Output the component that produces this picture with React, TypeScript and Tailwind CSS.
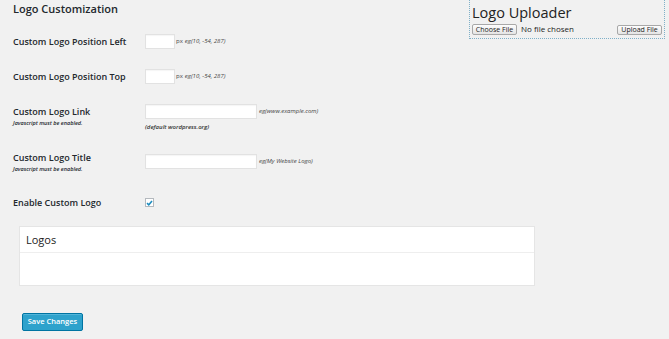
import React from 'react'

const Hint: React.FC<{ children: React.ReactNode }> = ({ children }) => (
  <span className="ml-[2px] text-[6px] italic text-[#444]">{children}</span>
)

const TextInput: React.FC<{ w: string }> = ({ w }) => (
  <div className={`${w} h-[15px] border border-[#e2e2e2] bg-white shadow-[inset_0_1px_1px_rgba(0,0,0,0.04)]`} />
)

const App: React.FC = () => {
  return (
    <div className="relative h-[339px] w-[669px] overflow-hidden bg-[#f1f1f1] font-['Open_Sans',sans-serif] text-[#23282d]">
      {/* Uploader box */}
      <div className="absolute left-[469px] top-[-2px] h-[41px] w-[196px] border border-dotted border-[#7fb0c8] px-[2px]">
        <div className="mt-[5px] text-[14.5px] leading-[17px] text-[#222]">Logo Uploader</div>
        <div className="mt-[2px] flex items-center">
          <button className="h-[11px] w-[45px] rounded-[2px] border border-[#a8a8a8] bg-gradient-to-b from-[#fdfdfd] to-[#e4e4e4] text-[7px] leading-[9px] text-[#222]">
            Choose File
          </button>
          <span className="ml-[4px] text-[8px] text-[#222]">No file chosen</span>
          <button className="ml-auto mt-[2px] h-[10px] w-[45px] rounded-[2px] border border-[#a8a8a8] bg-gradient-to-b from-[#fdfdfd] to-[#e4e4e4] text-[7px] leading-[8px] text-[#222]">
            Upload File
          </button>
        </div>
      </div>

      <div className="pl-[13px]">
        <div className="mt-[2px] text-[11px] font-semibold leading-[14px]">Logo Customization</div>

        {/* Position left */}
        <div className="mt-[18px] flex h-[15px] items-center">
          <div className="w-[132px] text-[9px] font-semibold">Custom Logo Position Left</div>
          <TextInput w="w-[30px]" />
          <span className="ml-[1px] text-[6px] text-[#444]">px</span>
          <Hint>eg(10, -54, 287)</Hint>
        </div>

        {/* Position top */}
        <div className="mt-[20px] flex h-[15px] items-center">
          <div className="w-[132px] text-[9px] font-semibold">Custom Logo Position Top</div>
          <TextInput w="w-[30px]" />
          <span className="ml-[1px] text-[6px] text-[#444]">px</span>
          <Hint>eg(10, -54, 287)</Hint>
        </div>

        {/* Link */}
        <div className="mt-[20px] flex h-[32px] items-start">
          <div className="w-[132px]">
            <div className="text-[9px] font-semibold leading-[15px]">Custom Logo Link</div>
            <div className="text-[5.5px] font-semibold italic leading-[9px]">Javascript must be enabled.</div>
          </div>
          <div>
            <div className="flex items-center">
              <TextInput w="w-[112px]" />
              <Hint>eg(www.example.com)</Hint>
            </div>
            <div className="mt-[3px] text-[6px] font-semibold italic leading-[10px] text-[#333]">(default wordpress.org)</div>
          </div>
        </div>

        {/* Title */}
        <div className="mt-[18px] flex h-[20px] items-start">
          <div className="-mt-[4px] w-[132px]">
            <div className="text-[9px] font-semibold leading-[15px]">Custom Logo Title</div>
            <div className="text-[5.5px] font-semibold italic leading-[9px]">Javascript must be enabled.</div>
          </div>
          <div className="flex items-center">
            <TextInput w="w-[112px]" />
            <Hint>eg(My Website Logo)</Hint>
          </div>
        </div>

        {/* Enable */}
        <div className="mt-[21px] flex h-[15px] items-center">
          <div className="w-[132px] text-[9px] font-semibold">Enable Custom Logo</div>
          <div className="flex h-[9px] w-[9px] items-center justify-center border border-[#b4b9be] bg-white">
            <svg width="7" height="6" viewBox="0 0 7 6">
              <path d="M1 3.2 L2.8 4.8 L6 1" fill="none" stroke="#1e8cbe" strokeWidth="1.6" />
            </svg>
          </div>
        </div>

        {/* Logos panel */}
        <div className="ml-[6px] mt-[16px] h-[60px] w-[516px] border border-[#e5e5e5] bg-white">
          <div className="flex h-[26px] items-center border-b border-[#eeeeee] pl-[6px] text-[11px] font-medium leading-none text-[#222]">
            Logos
          </div>
        </div>

        {/* Save */}
        <button className="ml-[9px] mt-[27px] h-[18px] w-[61px] rounded-[2px] border border-[#0074a2] bg-[#2ea2cc] text-[7.5px] font-semibold text-white shadow-[inset_0_1px_0_rgba(120,200,230,0.5)]">
          Save Changes
        </button>
      </div>
    </div>
  )
}

export default App
